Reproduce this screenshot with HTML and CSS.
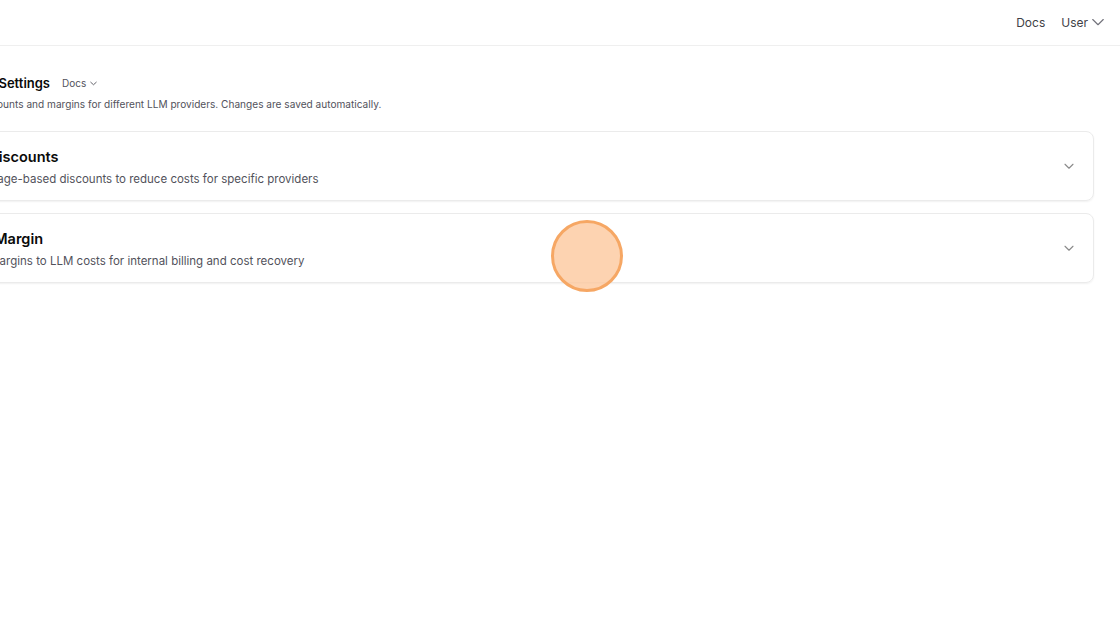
FILE: index.html
```html
<!DOCTYPE html>
<html lang="en">
<head>
    <meta charset="UTF-8">
    <meta name="viewport" content="width=device-width, initial-scale=1.0">
    <title>LLM Cost Settings</title>
    <link rel="stylesheet" href="styles.css">
</head>
<body>
    <header class="topbar">
        <nav class="topbar-nav">
            <a class="nav-link" href="#">Docs</a>
            <button class="user-menu" type="button">
                User
                <svg class="chevron" width="12" height="12" viewBox="0 0 12 12" fill="none">
                    <path d="M0.75 3.5l5.25 5.25l5.25-5.25" stroke="currentColor" stroke-width="1.1" stroke-linecap="round" stroke-linejoin="round"/>
                </svg>
            </button>
        </nav>
    </header>

    <main class="page">
        <!-- Page heading -->
        <div class="page-head">
            <div class="title-row">
                <h1 class="page-title">LLM Cost Settings</h1>
                <button class="docs-toggle" type="button">
                    Docs
                    <svg width="7" height="7" viewBox="0 0 7 7" fill="none">
                        <path d="M0.75 2.25l2.75 2.5l2.75-2.5" stroke="currentColor" stroke-width="0.9" stroke-linecap="round" stroke-linejoin="round"/>
                    </svg>
                </button>
            </div>
            <p class="page-desc">Manage discounts and margins for different LLM providers. Changes are saved automatically.</p>
        </div>

        <!-- Collapsible sections -->
        <section class="panel">
            <div class="panel-text">
                <h2 class="panel-title">Standard Discounts</h2>
                <p class="panel-desc">Apply percentage-based discounts to reduce costs for specific providers</p>
            </div>
            <svg class="panel-chevron" width="12" height="12" viewBox="0 0 12 12" fill="none">
                <path d="M2 4.25l4 4l4-4" stroke="currentColor" stroke-width="1.1" stroke-linecap="round" stroke-linejoin="round"/>
            </svg>
        </section>

        <section class="panel">
            <div class="panel-text">
                <h2 class="panel-title">Operating Margin</h2>
                <p class="panel-desc">Add custom margins to LLM costs for internal billing and cost recovery</p>
            </div>
            <svg class="panel-chevron" width="12" height="12" viewBox="0 0 12 12" fill="none">
                <path d="M2 4.25l4 4l4-4" stroke="currentColor" stroke-width="1.1" stroke-linecap="round" stroke-linejoin="round"/>
            </svg>
        </section>
    </main>

    <!-- click marker -->
    <div class="click-dot"></div>
</body>
</html>
```

FILE: styles.css
```css
body {
    margin: 0;
    padding: 0;
    font-family: 'Inter', 'Liberation Sans', sans-serif;
    background-color: #ffffff;
    color: #0a0a0a;
    overflow: hidden;
}

/* Top bar */
.topbar {
    height: 46px;
    box-sizing: border-box;
    border-bottom: 1px solid #efefef;
    display: flex;
    align-items: center;
    justify-content: flex-end;
    padding: 0 16px 1px 0;
}

.topbar-nav {
    display: flex;
    align-items: center;
    gap: 16px;
}

.nav-link {
    font-size: 12px;
    color: #3f3f46;
    text-decoration: none;
}

.user-menu {
    display: flex;
    align-items: center;
    gap: 4px;
    border: none;
    background: none;
    padding: 0;
    font-family: inherit;
    font-size: 12px;
    color: #3f3f46;
}

.user-menu .chevron {
    color: #71717a;
}

/* Page content (scrolled sideways, left part is off-screen) */
.page {
    margin-left: -80px;
    margin-right: 26px;
    padding-top: 28px;
}

.page-head {
    padding-left: 16px;
    margin-bottom: 20px;
}

.title-row {
    display: flex;
    align-items: center;
    gap: 12px;
}

.page-title {
    margin: 0;
    font-size: 13px;
    font-weight: 600;
    line-height: 18px;
}

.docs-toggle {
    display: flex;
    align-items: center;
    gap: 4px;
    border: none;
    background: none;
    padding: 0;
    font-family: inherit;
    font-size: 10px;
    color: #52525b;
}

.page-desc {
    margin: 5px 0 0 0;
    font-size: 10.1px;
    line-height: 14px;
    color: #52525b;
}

/* Sections */
.panel {
    display: flex;
    align-items: center;
    justify-content: space-between;
    height: 70px;
    box-sizing: border-box;
    padding: 0 18px 0 20px;
    margin-left: -20px;
    margin-bottom: 12px;
    border: 1px solid #ebebeb;
    border-radius: 8px;
    box-shadow: 0 1px 2px rgba(0, 0, 0, 0.06);
}

.panel-text {
    padding-top: 2px;
}

.panel-title {
    margin: 0;
    font-size: 14.5px;
    font-weight: 600;
    line-height: 18px;
}

.panel-desc {
    margin: 5px 0 0 0;
    font-size: 11.5px;
    line-height: 16px;
    color: #52525b;
}

.panel-chevron {
    color: #8a8a8a;
}

/* Click marker */
.click-dot {
    position: absolute;
    left: 551px;
    top: 220px;
    width: 66px;
    height: 66px;
    border-radius: 50%;
    background: rgba(253, 200, 158, 0.8);
    border: 3px solid #f6a764;
}
```
